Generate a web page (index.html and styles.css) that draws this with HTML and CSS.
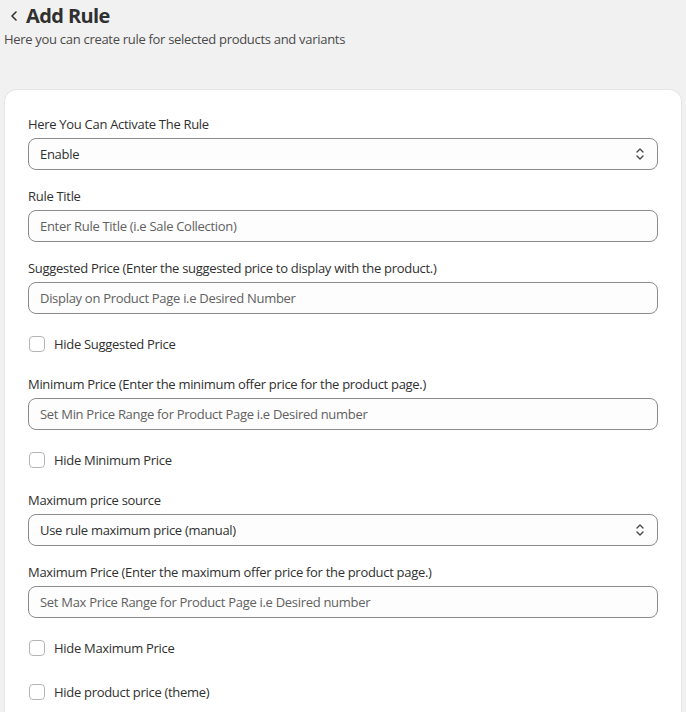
FILE: index.html
```html
<!DOCTYPE html>
<html lang="en">
<head>
    <meta charset="UTF-8">
    <meta name="viewport" content="width=device-width, initial-scale=1.0">
    <title>Add Rule</title>
    <link rel="stylesheet" href="styles.css">
</head>
<body>
    <div class="page-header">
        <h1 class="title">
            <span class="back">
                <svg width="8" height="10" viewBox="0 0 8 10"><path d="M6 1 L2 5 L6 9" fill="none" stroke="#303030" stroke-width="1.6" stroke-linecap="round" stroke-linejoin="round"/></svg>
            </span>
            Add Rule
        </h1>
        <p class="subtitle">Here you can create rule for selected products and variants</p>
    </div>

    <div class="card">
        <div class="field">
            <label>Here You Can Activate The Rule</label>
            <div class="select">
                <span>Enable</span>
                <svg width="10" height="16" viewBox="0 0 10 16"><path d="M2 6 L5 3 L8 6 M2 10 L5 13 L8 10" fill="none" stroke="#4a4a4a" stroke-width="1.4" stroke-linecap="round" stroke-linejoin="round"/></svg>
            </div>
        </div>
        <div class="field">
            <label>Rule Title</label>
            <div class="input">Enter Rule Title (i.e Sale Collection)</div>
        </div>
        <div class="field">
            <label>Suggested Price (Enter the suggested price to display with the product.)</label>
            <div class="input">Display on Product Page i.e Desired Number</div>
        </div>
        <div class="check"><span class="box"></span>Hide Suggested Price</div>
        <div class="field">
            <label>Minimum Price (Enter the minimum offer price for the product page.)</label>
            <div class="input">Set Min Price Range for Product Page i.e Desired number</div>
        </div>
        <div class="check"><span class="box"></span>Hide Minimum Price</div>
        <div class="field">
            <label>Maximum price source</label>
            <div class="select">
                <span>Use rule maximum price (manual)</span>
                <svg width="10" height="16" viewBox="0 0 10 16"><path d="M2 6 L5 3 L8 6 M2 10 L5 13 L8 10" fill="none" stroke="#4a4a4a" stroke-width="1.4" stroke-linecap="round" stroke-linejoin="round"/></svg>
            </div>
        </div>
        <div class="field">
            <label>Maximum Price (Enter the maximum offer price for the product page.)</label>
            <div class="input">Set Max Price Range for Product Page i.e Desired number</div>
        </div>
        <div class="check"><span class="box"></span>Hide Maximum Price</div>
        <div class="check"><span class="box"></span>Hide product price (theme)</div>
    </div>
</body>
</html>
```

FILE: styles.css
```css
body {
    font-family: 'Segoe UI', 'Open Sans', sans-serif;
    font-size: 13px;
    letter-spacing: -0.3px;
    color: #303030;
    background: #f1f1f1;
    margin: 0;
    padding: 0 5px;
    height: 712px;
    overflow: hidden;
}
.page-header {
    padding-top: 4px;
    height: 86px;
}
.title {
    display: flex;
    align-items: center;
    gap: 8px;
    margin: 0 0 0 5px;
    font-size: 20px;
    font-weight: 700;
    line-height: 24px;
    letter-spacing: -0.6px;
    color: #303030;
}
.back {
    display: flex;
}
.subtitle {
    margin: 1px 0 0 -1px;
    line-height: 20px;
    color: #4a4a4a;
}
.card {
    background: #fff;
    border-radius: 12px;
    box-shadow: 0 0 0 1px #e6e6e6, 0 1px 0 #e0e0e0;
    padding: 24px 23px;
    width: 630px;
}
.field {
    margin-bottom: 16px;
}
label {
    display: block;
    line-height: 20px;
    margin-bottom: 4px;
}
.input, .select {
    height: 30px;
    border: 1px solid #8a8a8a;
    border-radius: 8px;
    background: #fdfdfd;
    padding: 0 11px;
    display: flex;
    align-items: center;
    color: #616161;
}
.select {
    color: #303030;
    justify-content: space-between;
    padding-right: 12px;
}
.check {
    display: flex;
    align-items: center;
    gap: 9px;
    height: 28px;
    margin-bottom: 16px;
    padding-left: 1px;
}
.box {
    width: 14px;
    height: 14px;
    border: 1px solid #b5b5b5;
    border-radius: 4px;
    background: #fff;
}
```
